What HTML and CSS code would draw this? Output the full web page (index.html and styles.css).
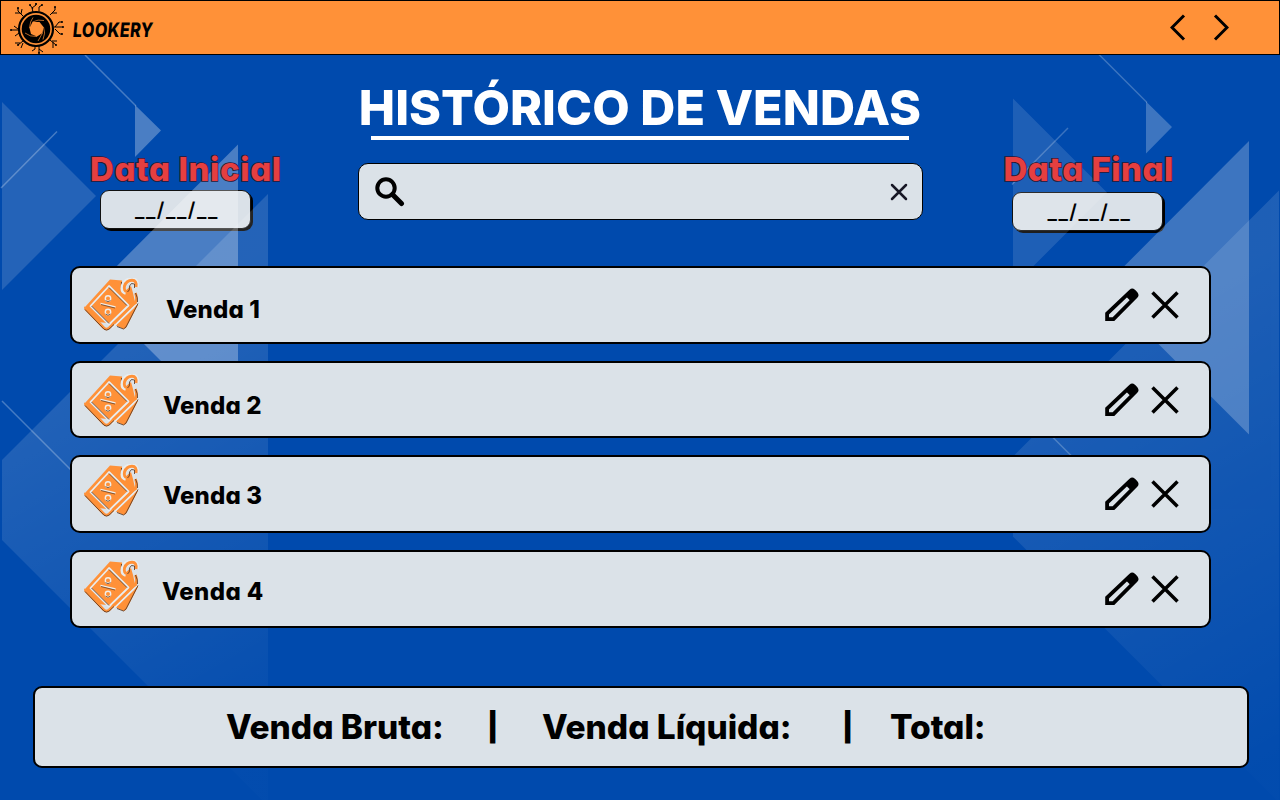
FILE: index.html
```html
<!DOCTYPE html>
<html lang="pt-BR">
<head>
<meta charset="utf-8">
<title>Lookery - Histórico de Vendas</title>
<link rel="stylesheet" href="styles.css">
</head>
<body>
<svg class="defs" width="0" height="0" aria-hidden="true">
  <symbol id="tag" viewBox="0 0 56 54">
    <path d="M26 1.500 38 2.500 38 8 41 13 47 8 49 15 51 24 32 46 14 44 1 29Z" fill="#ff9138"/>
    <path d="M52 24 54 27 42 50 39.500 51 32 47.500 50 30Z" fill="#ff9138"/>
    <path d="M25 8 44.500 27.500 25 46.500 6.500 28Z" fill="#ff9138" stroke="#e9ecee" stroke-width="1.800" stroke-linejoin="round"/>
    <path d="M1.500 29Q1 30 2 31.500L20 50Q22.500 52 25 50L51.500 24.500Q53.500 21 51.500 15" fill="none" stroke="#ff9138" stroke-width="2.600"/>
    <path d="M28 50 53 26" stroke="#e9ecee" stroke-width="1.300"/>
    <path d="M1 31.500 20 51.200Q22.500 53 25 51.200L30 46.500M33 48.500 39.500 51 42 49 54 25.500M25 9.500 43 27.500M7.500 28 25 45.500M51.500 15Q54 20 53.500 24M37.500 4Q36.500 10 38.500 13.500" fill="none" stroke="#4b3020" stroke-width=".8"/>
    <path d="M42 14Q38.500 13 39.500 8Q42 2 48 2Q53 2 52 9" fill="none" stroke="#e9ecee" stroke-width="5.500"/>
    <path d="M43 13.500Q39.500 13 40.500 8Q42.500 2.300 48 2.300Q53 2.300 52 9" fill="none" stroke="#ff9138" stroke-width="2.900"/>
    <path d="M43.500 14Q46 13 45.500 8Q47 4 50.500 6V10" fill="none" stroke="#4b3020" stroke-width=".8"/>
    <g fill="none" stroke="#f1eee9" stroke-width="1.400"><circle cx="24" cy="20.500" r="2.700"/><circle cx="24" cy="34" r="2.700"/><path d="M16.500 25.500 31.500 29"/></g>
    <path d="M17 26.500 31 30M21.500 22.500Q24 25 26.500 22.500M21.500 36Q24 38.500 26.500 36" fill="none" stroke="#4b3020" stroke-width=".7"/>
  </symbol>
  <symbol id="pencil" viewBox="0 0 36 36">
    <path d="M3.100 32.200V26.600L26.800 4.100Q28.200 2.900 29.600 4.200L32 6.600Q33.200 8.100 31.900 9.500L9.500 32.200Z" fill="none" stroke="#000" stroke-width="3.800"/>
    <path d="M22 8 27 3Q28.500 1.500 30.500 3.300L33 6Q34 8 32.500 10L28.500 14 26 13.500 22.500 10Z"/>
  </symbol>
  <symbol id="cross" viewBox="0 0 28 28"><path d="M1.500 1.500 26.500 26.500M26.500 1.500 1.500 26.500" stroke="#000" stroke-width="3.500"/></symbol>
</svg>

<header class="topbar">
  <div class="brand">
    <svg class="logo" viewBox="0 0 54 52">
      <g fill="none" stroke="#000" stroke-width="1">
        <path d="M23 10 22 6 26 3V1M23 7 20 3M29 9V5L32 3M13 14 8 9V6M10 11H5M11 12 12 7M40 13 45 8V5M42 11 47 11M44 25H53M45 25 49 20H52M45 27 50 32H52M9 28H1M8 27 4 24M9 31 5 34M13 39 8 43M10 41H5M13 41 11 46M25 43V47L22 49M29 44V51M29 47 33 50M40 38 46 43M43 40V46M42 39H47"/>
      </g>
      <g><circle cx="20" cy="3" r="1"/><circle cx="26" cy="2" r="1"/><circle cx="32" cy="3" r="1"/><circle cx="8" cy="6" r="1"/><circle cx="45" cy="5" r="1"/><circle cx="53" cy="25" r="1"/><circle cx="52" cy="20" r="1"/><circle cx="52" cy="32" r="1"/><circle cx="1" cy="28" r="1"/><circle cx="8" cy="43" r="1"/><circle cx="29" cy="51" r="1"/><circle cx="46" cy="43" r="1"/></g>
      <circle cx="26" cy="27" r="17" fill="#ff9138" stroke="#000" stroke-width="2.200"/>
      <circle cx="26" cy="27" r="14.300"/>
      <path d="M22.500 20 29.500 20 33.500 25 32.500 31 27 34.500 21 32 19.500 26Z" fill="#ff9138"/>
      <path d="M22.500 20Q28 17 34 18.500M33.500 25Q36 31 33 37.500M27 34.500Q20 35 15 31M19.500 26Q20 19 23 15.500M32.500 31 28 39" fill="none" stroke="#ff9138" stroke-width=".7"/>
    </svg>
    <span class="wordmark">LOOKERY</span>
  </div>
  <nav class="arrows">
    <svg width="16" height="27" viewBox="0 0 16 27"><path d="M14 1.500 2 13.500 14 25.500"/></svg>
    <svg width="16" height="27" viewBox="0 0 16 27"><path d="M2 1.500 14 13.500 2 25.500"/></svg>
  </nav>
</header>

<svg class="shapes" width="1280" height="800" viewBox="0 0 1280 800" aria-hidden="true">
  <defs>
    <linearGradient id="fade" gradientUnits="userSpaceOnUse" x1="50" y1="370" x2="270" y2="760">
      <stop offset="0" stop-color="#fff" stop-opacity=".14"/><stop offset="1" stop-color="#fff" stop-opacity=".01"/>
    </linearGradient>
    <g id="geo">
      <path d="M2 102 96 196 2 290Z" fill="#fff" fill-opacity=".14"/>
      <path d="M268 194V806L2 540V460Z" fill="url(#fade)"/>
      <path d="M1 188 57 131.500M85 55 136 106M2 401 74 473" stroke="#fff" stroke-opacity=".27" stroke-width="1.500"/>
    </g>
    <g id="bright"><path d="M135 105 161 130.500 135 157ZM238 144.500V438L91.500 291.500Z" fill="#fff"/></g>
  </defs>
  <use href="#geo"/><use href="#bright" opacity=".29"/>
  <g transform="translate(1011 -3.500)"><use href="#geo" opacity=".85"/><use href="#bright" opacity=".24"/></g>
</svg>

<main class="page">
  <section class="filters">
    <div class="date date-start">
      <label class="date-label">Data Inicial</label>
      <div class="date-box"><span class="date-value">__/__/__</span></div>
    </div>
    <div class="center">
      <h1 class="title">HISTÓRICO DE VENDAS</h1>
      <div class="rule"></div>
      <div class="search">
        <svg width="30" height="30" viewBox="0 0 30 30"><circle cx="11" cy="11" r="8.700" fill="none" stroke="#000" stroke-width="4"/><path d="M17.500 17.500 26.500 26.500" stroke="#000" stroke-width="5" stroke-linecap="round"/></svg>
        <svg width="18" height="18" viewBox="0 0 18 18"><path d="M2 2 16 16M16 2 2 16" stroke="#171725" stroke-width="2.500" stroke-linecap="round"/></svg>
      </div>
    </div>
    <div class="date date-end">
      <label class="date-label">Data Final</label>
      <div class="date-box"><span class="date-value">__/__/__</span></div>
    </div>
  </section>

  <section class="sales">
    <article class="sale"><svg class="tag"><use href="#tag"/></svg><span class="name name-1">Venda 1</span><svg class="pencil"><use href="#pencil"/></svg><svg class="cross"><use href="#cross"/></svg></article>
    <article class="sale lowered"><svg class="tag"><use href="#tag"/></svg><span class="name name-2">Venda 2</span><svg class="pencil"><use href="#pencil"/></svg><svg class="cross"><use href="#cross"/></svg></article>
    <article class="sale raised"><svg class="tag"><use href="#tag"/></svg><span class="name name-3">Venda 3</span><svg class="pencil"><use href="#pencil"/></svg><svg class="cross"><use href="#cross"/></svg></article>
    <article class="sale last"><svg class="tag"><use href="#tag"/></svg><span class="name name-4">Venda 4</span><svg class="pencil"><use href="#pencil"/></svg><svg class="cross"><use href="#cross"/></svg></article>
  </section>

  <footer class="totals">
    <span class="gross">Venda Bruta:</span>
    <span class="bar">|</span>
    <span class="net">Venda Líquida:</span>
    <span class="bar">|</span>
    <span class="total">Total:</span>
  </footer>
</main>
</body>
</html>
```
FILE: styles.css
```css
* { box-sizing: border-box; }
body {
  margin: 0;
  width: 1280px;
  height: 800px;
  overflow: hidden;
  background: #004aad;
  color: #000;
  font-family: Inter, "Open Sans", sans-serif;
  font-weight: 800;
  font-feature-settings: "cv11";
}
svg { display: block; flex: none; }
.defs { position: absolute; }
.topbar {
  height: 55px;
  display: flex;
  justify-content: space-between;
  background: #ff9138;
  border: solid #000;
  border-width: 1px 1px 1.500px 1.500px;
}
.brand { display: flex; align-items: flex-start; padding: 1px 0 0 9px; }
.logo { width: 54px; height: 52px; }
.wordmark {
  margin: 15px 0 0 9px;
  font: 800 20px/26px Inter, sans-serif;
  letter-spacing: .4px;
  transform: scaleX(.81) skewX(-7deg);
  transform-origin: 0 50%;
}
.arrows { display: flex; gap: 27px; padding: 13px 50px 0 0; }
.arrows path { fill: none; stroke: #000; stroke-width: 3; }
.shapes { position: absolute; left: 0; top: 0; z-index: 1; pointer-events: none; clip-path: inset(55px 0 0 0); }
.page { display: flex; flex-direction: column; }
.filters { display: flex; height: 211px; }
.date { width: 358px; padding-top: 96px; }
.date-label {
  display: block;
  position: relative;
  z-index: 2;
  width: max-content;
  margin-left: 90px;
  font-size: 33px;
  line-height: 36px;
  letter-spacing: .6px;
  color: #e53f40;
  -webkit-text-stroke: 1.6px #2b1634;
  paint-order: stroke fill;
  white-space: nowrap;
}
.date-box {
  width: 151px;
  height: 39px;
  margin: 3px 0 0 100px;
  padding-left: 34px;
  border: 1px solid #111;
  border-radius: 9px;
  background: #dae1e8;
  box-shadow: 2px 2px 0 #000;
  font-size: 20px;
  line-height: 39px;
  font-weight: 600;
  letter-spacing: 1.550px;
}
.date-value { position: relative; z-index: 2; }
.date-end .date-label { margin-left: 81px; letter-spacing: .5px; }
.date-end .date-box { margin: 5px 0 0 89px; padding-left: 35px; }
.center { width: 565px; display: flex; flex-direction: column; align-items: center; padding-top: 24px; }
.title { margin: 0; font-size: 48.500px; line-height: 58px; font-weight: 800; letter-spacing: .05px; color: #fff; white-space: nowrap; }
.rule { width: 538px; height: 4px; margin-top: -1px; background: #fff; }
.search {
  width: 565px;
  height: 57px;
  margin-top: 23px;
  padding: 0 14px 0 16px;
  display: flex;
  align-items: center;
  justify-content: space-between;
  border: 1px solid #000;
  border-radius: 10px;
  background: #dbe2e8;
}
.sales {
  position: relative;
  z-index: 2;
  display: grid;
  grid-template-rows: 78px 77px 78px 78px;
  row-gap: 17px;
  margin: 0 69px 0 70px;
}
.sale {
  display: flex;
  align-items: flex-start;
  padding: 0 30px 0 12px;
  border: 2px solid #000;
  border-radius: 10px;
  background: #dbe2e8;
}
.tag { width: 56px; height: 54px; margin-top: 10px; }
.name { margin-top: 27px; font-size: 24px; line-height: 30px; flex: 1; letter-spacing: .15px; }
.name-1 { padding-left: 26px; }
.name-2, .name-3 { padding-left: 23px; }
.name-4 { padding-left: 22px; letter-spacing: .4px; }
.lowered .tag { margin-top: 11px; }
.lowered .name { margin-top: 28px; }
.raised .tag { margin-top: 7px; }
.raised .name { margin-top: 24px; }
.last .tag { margin-top: 8px; }
.last .name { margin-top: 25px; }
.pencil { width: 36px; height: 36px; margin: 19px 11px 0 0; }
.cross { width: 28px; height: 28px; margin-top: 23px; }
.totals {
  position: relative;
  z-index: 2;
  display: flex;
  align-items: center;
  width: 1216px;
  height: 82px;
  margin: 58px 0 0 33px;
  border: 2px solid #000;
  border-radius: 9px;
  background: #dbe2e8;
  font-size: 33.500px;
  letter-spacing: -.05px;
  white-space: nowrap;
}
.totals span { flex: none; }
.gross { width: 261px; margin-left: 191px; }
.net { width: 300px; margin-left: 47px; }
.total { margin-left: 40px; }
.bar { width: 8px; font-size: 28px; font-weight: 900; }
```
